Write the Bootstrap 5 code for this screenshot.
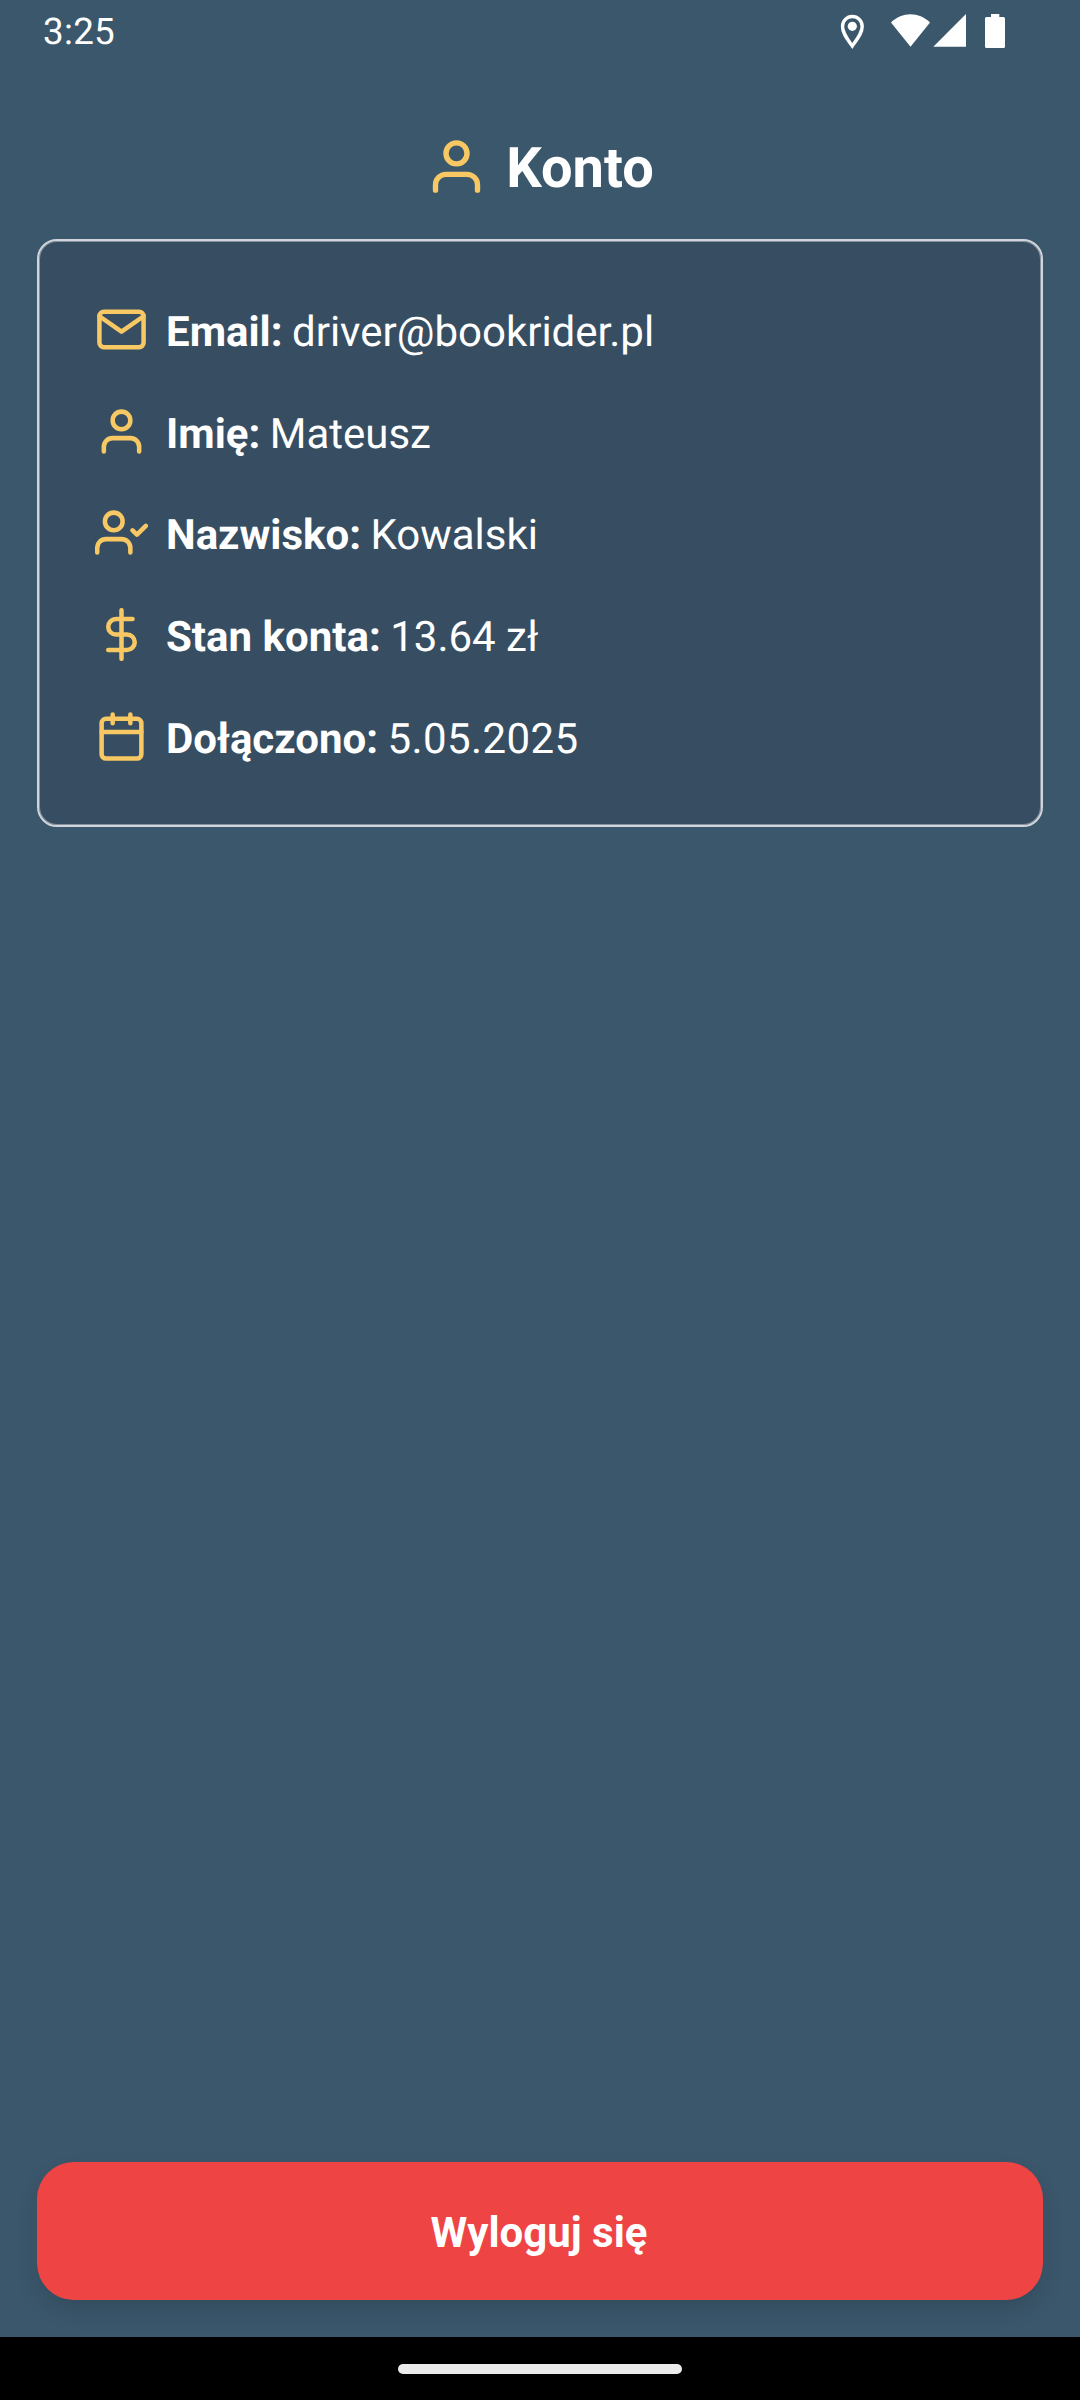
<!DOCTYPE html>
<html lang="pl">
<head>
<meta charset="utf-8">
<meta name="viewport" content="width=device-width, initial-scale=1">
<title>Konto</title>
<link href="https://cdn.jsdelivr.net/npm/bootstrap@5.3.0/dist/css/bootstrap.min.css" rel="stylesheet">
<style>
  body { font-family: Roboto, "Noto Sans", sans-serif; background: #3b576c; color: #fff; text-rendering: geometricPrecision; }
  .screen { height: 2400px; overflow: hidden; }
  .status-bar { height: 63px; padding: 0 75px 0 43px; }
  .clock { font-size: 36.75px; line-height: 63px; letter-spacing: .3px; }
  .status-icons svg { display: block; }
  .page-title { height: 63px; margin-top: 72px; gap: 18px; padding-right: 1px; }
  .page-title h1 { font-size: 56px; line-height: 66px; padding-top: 2px; }
  .gold-icon { fill: none; stroke: #f7c863; stroke-width: 2.05; stroke-linecap: round; stroke-linejoin: round; flex: none; display: block; }
  .account-card { margin: 41px 37px 0; height: 588px; border: 2px solid #d1d5db; border-radius: 20px; background: #374e62; box-shadow: inset 0 0 0 1px rgba(209,213,219,.5); padding: 38px 56px; color: #fff; }
  .info-row { height: 101.7px; gap: 18px; }
  .info-row p { font-size: 42px; line-height: 50px; padding-top: 7px; white-space: nowrap; }
  .info-row strong { margin-right: -1px; }
  .date-value { letter-spacing: .4px; }
  .logout { margin: 0 37px 37px; height: 138px; padding: 3px 2px 0 0; border: 0; border-radius: 37px; background: #ef4444; color: #fff; font-size: 42px; line-height: 50px; box-shadow: 0 11px 22px rgba(0,0,0,.12); }
  .nav-area { height: 63px; padding-top: 27px; z-index: 1; }
  .handle { width: 284px; height: 10px; background: #ebebeb; }
</style>
<script src="https://cdn.jsdelivr.net/npm/bootstrap@5.3.0/dist/js/bootstrap.bundle.min.js"></script>
</head>
<body>
<div class="screen d-flex flex-column">
  <header class="status-bar d-flex justify-content-between flex-shrink-0">
    <span class="clock">3:25</span>
    <div class="status-icons d-flex">
      <svg width="165" height="63" viewBox="840 0 165 63" fill="#fff" aria-hidden="true">
        <path d="M852.3 46 C847 38.500 842.500 33 842.500 26.500 A9.850 10 0 0 1 862.200 26.500 C862.200 33 857.600 38.500 852.300 46Z" fill="none" stroke="#fff" stroke-width="3.400"/>
        <circle cx="852.3" cy="26.300" r="4.600"/>
        <path d="M891 22.500 C902 11.500 919 11.500 930 22.500 L910.500 46.800Z"/>
        <path d="M966 14 V46.700 H933.300Z"/>
        <path d="M991 14 H999.300 V17 H1003.500 Q1005 17 1005 18.500 V46.500 Q1005 48 1003.500 48 H986.500 Q985 48 985 46.500 V18.500 Q985 17 986.500 17 H991Z"/>
      </svg>
    </div>
  </header>

  <div class="page-title d-flex align-items-center justify-content-center flex-shrink-0">
    <svg class="gold-icon" width="63" height="63" viewBox="0 0 24 24"><path d="M20 21v-2a4 4 0 0 0-4-4H8a4 4 0 0 0-4 4v2"/><circle cx="12" cy="7" r="4"/></svg>
    <h1 class="fw-bold mb-0">Konto</h1>
  </div>

  <main class="account-card card flex-shrink-0">
    <div class="info-row d-flex align-items-center">
      <svg class="gold-icon" width="53" height="53" viewBox="0 0 24 24"><path d="M4 4h16c1.100 0 2 .9 2 2v12c0 1.100-.9 2-2 2H4c-1.100 0-2-.9-2-2V6c0-1.100.9-2 2-2z"/><path d="M22 6l-10 7L2 6"/></svg>
      <p class="mb-0"><strong>Email:</strong> driver@bookrider.pl</p>
    </div>
    <div class="info-row d-flex align-items-center">
      <svg class="gold-icon" width="53" height="53" viewBox="0 0 24 24"><path d="M20 21v-2a4 4 0 0 0-4-4H8a4 4 0 0 0-4 4v2"/><circle cx="12" cy="7" r="4"/></svg>
      <p class="mb-0"><strong>Imię:</strong> Mateusz</p>
    </div>
    <div class="info-row d-flex align-items-center">
      <svg class="gold-icon" width="53" height="53" viewBox="0 0 24 24"><path d="M16 21v-2a4 4 0 0 0-4-4H5a4 4 0 0 0-4 4v2"/><circle cx="8.500" cy="7" r="4"/><path d="M17 11l2 2 4-4"/></svg>
      <p class="mb-0"><strong>Nazwisko:</strong> Kowalski</p>
    </div>
    <div class="info-row d-flex align-items-center">
      <svg class="gold-icon" width="53" height="53" viewBox="0 0 24 24"><path d="M12 1v22M17 5H9.500a3.500 3.500 0 0 0 0 7h5a3.500 3.500 0 0 1 0 7H6"/></svg>
      <p class="mb-0"><strong>Stan konta:</strong> 13.64 zł</p>
    </div>
    <div class="info-row d-flex align-items-center">
      <svg class="gold-icon" width="53" height="53" viewBox="0 0 24 24"><rect x="3" y="4" width="18" height="18" rx="2"/><path d="M16 2v4M8 2v4M3 10h18"/></svg>
      <p class="mb-0"><strong>Dołączono:</strong> <span class="date-value">5.05.2025</span></p>
    </div>
  </main>

  <button type="button" class="logout btn fw-bold mt-auto flex-shrink-0">Wyloguj się</button>

  <footer class="nav-area bg-black d-flex justify-content-center flex-shrink-0 position-relative">
    <div class="handle rounded-pill"></div>
  </footer>
</div>
</body>
</html>
